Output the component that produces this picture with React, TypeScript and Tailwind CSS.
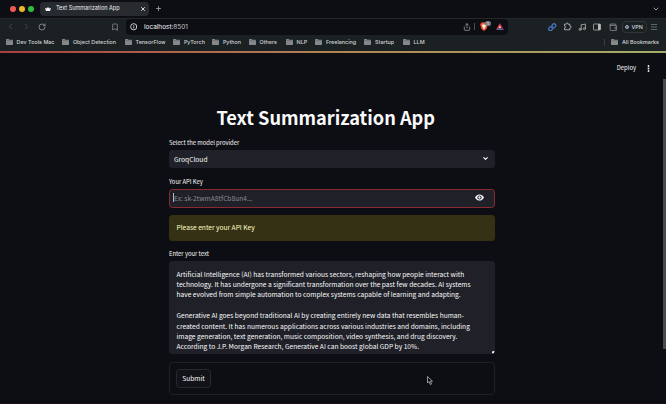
import type { ReactNode } from "react";
import { ChevronLeft, ChevronRight, ChevronDown, RotateCw, Bookmark, Info, Share, Link, Music, Wallet, Plus, X } from "lucide-react";

const bookmarks = [
  { label: "Dev Tools Mac", width: "w-[56.3px]" },
  { label: "Object Detection", width: "w-[62.7px]" },
  { label: "TensorFlow", width: "w-[48.3px]" },
  { label: "PyTorch", width: "w-[39px]" },
  { label: "Python", width: "w-[36.7px]" },
  { label: "Others", width: "w-[37px]" },
  { label: "NLP", width: "w-[29.5px]" },
  { label: "Freelancing", width: "w-[49px]" },
  { label: "Startup", width: "w-[38.5px]" },
  { label: "LLM", width: "w-[30px]" },
];

const lines = [
  "Artificial Intelligence (AI) has transformed various sectors, reshaping how people interact with",
  "technology. It has undergone a significant transformation over the past few decades. AI systems",
  "have evolved from simple automation to complex systems capable of learning and adapting.",
  "",
  "Generative AI goes beyond traditional AI by creating entirely new data that resembles human-",
  "created content. It has numerous applications across various industries and domains, including",
  "image generation, text generation, music composition, video synthesis, and drug discovery.",
  "According to J.P. Morgan Research, Generative AI can boost global GDP by 10%.",
];

function Folder() {
  return (
    <svg className="mr-[3.6px] h-[6px] w-[7px] shrink-0" viewBox="0 0 7 6">
      <path d="M0 .8Q0 0 .8 0H2.6L3.3.8H6.3Q7 .8 7 1.5V5.3Q7 6 6.3 6H.7Q0 6 0 5.3Z" fill="#85898b" />
      <path d="M0 1.7H7" stroke="#5d6264" strokeWidth=".5" />
    </svg>
  );
}

function Label({ children }: { children: ReactNode }) {
  return <div className="h-[10px] whitespace-nowrap text-[5.85px] leading-[10px] text-[#fafafa]">{children}</div>;
}

function TabBar() {
  return (
    <div className="flex h-[17.5px] items-center">
      <div className="ml-[10px] flex gap-[3.5px]">
        <i className="size-[5.5px] rounded-full bg-[#ee5b52]" />
        <i className="size-[5.5px] rounded-full bg-[#f2b52c]" />
        <i className="size-[5.5px] rounded-full bg-[#2fbd40]" />
      </div>
      <div className="ml-[6.5px] flex h-[14.5px] w-[108.5px] items-center rounded-[4px] bg-[#272b30]">
        <svg className="ml-[5px] h-[4px] w-[6px]" viewBox="0 0 6 4">
          <path d="M0 .8L1.5 1.6L3 0L4.5 1.6L6 .8L5.1 4H.9Z" fill="#f3f3f3" />
        </svg>
        <span className="ml-[5px] pb-[1px] whitespace-nowrap text-[5.5px] leading-[10px] text-[#f0f1f3]">Text Summarization App</span>
        <X className="mr-[3px] ml-auto size-[6px]" strokeWidth={3.5} color="#ededed" />
      </div>
      <Plus className="ml-[6.5px] size-[7px]" strokeWidth={2.5} color="#b6b8bb" />
      <ChevronDown className="mr-[6px] ml-auto size-[8px]" strokeWidth={2.3} color="#b6b8bb" />
    </div>
  );
}

function Toolbar() {
  return (
    <div className="flex h-[17.5px] items-center border-t border-[#24282a] bg-[#1b2023]">
      <ChevronLeft className="ml-[6px] size-[9px]" strokeWidth={2} color="#54595d" />
      <ChevronRight className="ml-[7px] size-[9px]" strokeWidth={2} color="#54595d" />
      <RotateCw className="ml-[6.5px] size-[8px]" strokeWidth={2.2} color="#a1a5a8" />
      <Bookmark className="ml-[65.5px] h-[8px] w-[8px]" strokeWidth={2.2} color="#8f9496" />
      <div className="ml-[7px] flex h-[15.5px] w-[382px] items-center rounded-[4px] bg-[#0c0e13]">
        <Info className="ml-[3.5px] size-[7.5px]" strokeWidth={2.8} color="#dedfe1" />
        <span className="ml-[7px] text-[6.45px] leading-[10px] text-[#f0f1f3]">localhost:<span className="text-[#c5c8cc]">8501</span></span>
        <Share className="ml-auto size-[8px]" strokeWidth={2.2} color="#a1a4a7" />
        <i className="mr-[5px] ml-[3.5px] h-[7px] w-px bg-[#4b4e52]" />
        <div className="relative h-[9px] w-[10px]">
          <svg className="h-[9px] w-[8px]" viewBox="0 0 8 9">
            <path d="M1.6.6L4 .3L6.3.6L7.8 2.2L6.7 6.7L4 8.9L1.3 6.7L.2 2.2Z" fill="#ef5431" />
            <path d="M1.7 2.4L3.2 2.7L4 2.3L4.8 2.7L6.3 2.4L5.5 4.2L5.8 5L4.5 5.6L5 6.4L4 7.2L3 6.4L3.5 5.6L2.2 5L2.5 4.2Z" fill="#fff0e5" />
          </svg>
          <span className="absolute -top-[1.5px] left-[5px] size-[5.5px] rounded-full bg-[#777b83] text-center text-[4px] leading-[5.5px] text-white">1</span>
        </div>
        <svg className="mr-[4px] ml-[6px] h-[7px] w-[8px]" viewBox="0 0 8 7">
          <path d="M4 0L0 7L4 4.7Z" fill="#ef4b2c" />
          <path d="M4 0L8 7L4 4.7Z" fill="#a52a55" />
          <path d="M0 7L4 4.7L8 7Z" fill="#5960a8" />
          <path d="M4 2.8L2.9 4.8H5.1Z" fill="#fff" />
        </svg>
      </div>
      <Link className="ml-[40px] size-[8.5px]" strokeWidth={3.2} color="#477bc9" />
      <svg className="ml-[6px] size-[9px]" viewBox="0 0 18 18">
        <path d="M3 4.5H6.3V4A2 2 0 0 1 10.3 4V4.5H13.6V8H14.2A2 2 0 0 1 14.2 12H13.6V15.5H3V12A2 2 0 0 0 3 8Z" fill="none" stroke="#b0b4b5" strokeWidth="1.8" strokeLinejoin="round" />
      </svg>
      <Music className="ml-[6px] size-[8.5px]" strokeWidth={2.5} color="#a5a9aa" />
      <svg className="ml-[7px] h-[8px] w-[8px]" viewBox="0 0 8 8">
        <rect x=".5" y="1" width="7" height="6" rx=".6" fill="none" stroke="#a5a9aa" strokeWidth=".8" />
        <path d="M5 1H7.5V7H5Z" fill="#b7babb" />
      </svg>
      <Wallet className="ml-[7.5px] size-[8.5px]" strokeWidth={2.2} color="#8e9395" />
      <div className="ml-[4.5px] flex h-[12px] w-[25px] items-center rounded-[4px] border border-[#30363b] pl-[2.5px] text-[5.4px] leading-[10px] font-medium text-[#d5d8dc]">
        <i className="mr-[2.5px] size-[4px] shrink-0 rounded-full border border-[#a6aac0] bg-[#62677a]" />VPN
      </div>
      <svg className="ml-[4.5px] h-[6px] w-[6px]" viewBox="0 0 6 6">
        <path d="M0 .5H6M0 3H6M0 5.5H6" stroke="#686e71" strokeWidth=".9" />
      </svg>
    </div>
  );
}

function BookmarkBar() {
  return (
    <div className="flex h-[16px] items-center bg-[#1b2023] pb-[2px] pl-[6px] text-[5.4px] leading-[10px] font-medium text-[#d2d4d6]">
      {bookmarks.map((b) => (
        <div key={b.label} className={`${b.width} flex shrink-0 items-center whitespace-nowrap`}>
          <Folder />{b.label}
        </div>
      ))}
      <div className="mr-[7px] ml-auto flex h-[7px] items-center whitespace-nowrap border-l border-[#3a4144] pl-[6px]"><Folder />All Bookmarks</div>
    </div>
  );
}

export default function App() {
  return (
    <div className="relative h-[404px] w-[666px] overflow-hidden bg-[#0d0e13] font-[Inter,sans-serif]">
      <TabBar />
      <Toolbar />
      <BookmarkBar />
      <div className="h-[1.5px] bg-linear-to-r from-[#a83e40] via-[#b08455] to-[#a3ad68]" />
      <div className="font-['Noto_Sans_CJK_SC','Noto_Sans_CJK_JP',sans-serif]">
        <div className="flex h-[31.5px] items-center justify-end pr-[16px] text-[5.9px] leading-[10px] text-[#fafafa]">
          Deploy
          <svg className="ml-[11px] h-[7px] w-[3px]" viewBox="0 0 3 7" fill="#f0f0f2">
            <circle cx="1.5" cy="1" r=".9" /><circle cx="1.5" cy="3.5" r=".9" /><circle cx="1.5" cy="6" r=".9" />
          </svg>
        </div>
        <main className="mr-auto ml-[169px] flex w-[325.5px] flex-col pt-[18px]">
          <h1 className="h-[30px] pr-[12px] text-center text-[18.2px] leading-[30px] font-bold whitespace-nowrap text-[#fafafa]">Text Summarization App</h1>
          <div className="mt-[5.5px]"><Label>Select the model provider</Label></div>
          <div className="mt-[2.5px] flex h-[18px] items-center justify-between rounded-[3.5px] bg-[#1f2028] pr-[6px] pb-[1px] pl-[5px] text-[6.65px] leading-[10px] text-[#fafafa]">
            GroqCloud
            <ChevronDown className="size-[7px]" strokeWidth={3.8} />
          </div>
          <div className="mt-[8.5px]"><Label>Your API Key</Label></div>
          <div className="mt-[2px] flex h-[19px] items-center rounded-[3.5px] border border-[#8a2b32] bg-[#1f2028] pr-[10px] pb-[1px] pl-[3px] text-[6.65px] leading-[10px] text-[#8b8c92]">
            <i className="h-[9px] w-px shrink-0 bg-[#b8b9bd]" />
            <span>Ex: sk-2twmA8tfCb8un4...</span>
            <svg className="ml-auto h-[7px] w-[9px]" viewBox="0 0 18 14">
              <path d="M0 7Q3 .8 9 .8T18 7Q15 13.2 9 13.2T0 7Z" fill="#f1f1f3" />
              <circle cx="9" cy="7" r="4.2" fill="#25262d" /><circle cx="9" cy="7" r="2.3" fill="#f1f1f3" />
            </svg>
          </div>
          <div className="mt-[7.5px] flex h-[26px] items-center rounded-[3.5px] bg-[#353115] pb-[2px] pl-[7.5px] text-[6.65px] leading-[10px] text-[#ffffc2]">Please enter your API Key</div>
          <div className="mt-[8px]"><Label>Enter your text</Label></div>
          <div className="relative mt-[2px] h-[93px] rounded-[3.5px] bg-[#1f2028] pt-[7.8px] pl-[7.5px] text-[6.65px] leading-[10.35px] text-[#fafafa]">
            {lines.map((line, i) => <div key={i} className="h-[10.35px] whitespace-nowrap">{line}</div>)}
            <svg className="absolute right-0 bottom-0 size-[4px]" viewBox="0 0 4 4"><path d="M1 1.5L3.5 .8L3 3L1 3.6Z" fill="#eee" /></svg>
          </div>
          <div className="relative mt-[8px] flex h-[33px] items-center rounded-[4px] border border-[#1e2026] pb-[1px] pl-[6px]">
            <button className="h-[19px] w-[35px] rounded-[3.5px] border border-[#262a2e] bg-[#111319] text-[6.65px] leading-[10px] text-[#fafafa]">Submit</button>
            <svg className="absolute top-[12.5px] left-[256.5px] h-[9px] w-[6px]" viewBox="0 0 12 18">
              <path d="M1 1V14L4 11L6.5 17L9 16L6.7 10.5H11Z" fill="#090a0d" stroke="#c3c3c6" strokeWidth="1.5" />
            </svg>
          </div>
        </main>
      </div>
      <div className="absolute top-[79px] right-0 h-[270px] w-[3px] bg-[#4a4b4f]" />
      <div className="absolute bottom-0 left-0 h-px w-full bg-[#1c1015]" />
    </div>
  );
}
